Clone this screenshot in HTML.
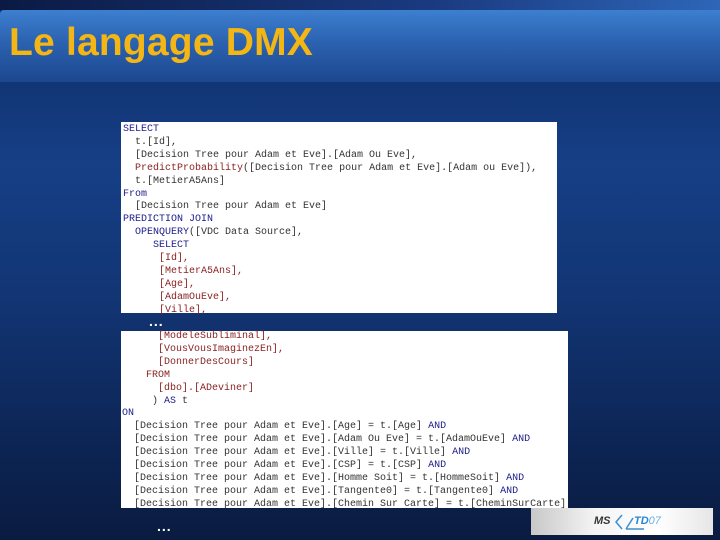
<!DOCTYPE html>
<html><head><meta charset="utf-8"><style>
*{margin:0;padding:0}
body{width:720px;height:540px;overflow:hidden;position:relative;font-family:"Liberation Sans",sans-serif;
background:linear-gradient(180deg,#0e2a62 0%,#163f86 30%,#123574 55%,#0d2657 80%,#0a1b40 100%);}
.top{position:absolute;left:0;top:0;width:720px;height:10px;background:linear-gradient(90deg,#0b1a44,#1a3a80 60%,#2e66b8);}
.hdr{position:absolute;left:0;top:10px;width:720px;height:72px;background:linear-gradient(180deg,#3d7fd0 0%,#2b62b0 45%,#1d478f 100%);border-top-left-radius:4px}
h1{position:absolute;left:9px;top:21px;font-size:39px;font-weight:bold;color:#f4b614;letter-spacing:0.2px}
.box{position:absolute;background:#fff;font-family:"Liberation Mono",monospace;font-size:10px;line-height:12.9px;color:#333;white-space:pre}
.k{color:#1c1c8a}.m{color:#8a2222}
.dots{position:absolute;color:#fff;font-weight:bold;font-size:14px;letter-spacing:1px}
.logo{position:absolute;left:531px;top:508px;width:182px;height:27px;background:linear-gradient(90deg,#c8c8c8,#f4f4f4 35%,#fff 70%,#e6e6e6)}
</style></head><body>
<div class="top"></div><div class="hdr"></div>
<h1>Le langage DMX</h1>
<div class="box" style="left:121px;top:122px;width:436px;height:191px;padding:2px 0 0 2px;box-sizing:border-box"><span class="k">SELECT</span>
  t.[Id],
  [Decision Tree pour Adam et Eve].[Adam Ou Eve],
  <span class="m">PredictProbability</span>([Decision Tree pour Adam et Eve].[Adam ou Eve]),
  t.[MetierA5Ans]
<span class="k">From</span>
  [Decision Tree pour Adam et Eve]
<span class="k">PREDICTION JOIN</span>
  <span class="k">OPENQUERY</span>([VDC Data Source],
     <span class="k">SELECT</span>
      <span class="m">[Id],</span>
      <span class="m">[MetierA5Ans],</span>
      <span class="m">[Age],</span>
      <span class="m">[AdamOuEve],</span>
      <span class="m">[Ville],</span></div>
<div class="dots" style="left:149px;top:313px">...</div>
<div class="box" style="left:121px;top:331px;width:447px;height:177px;padding:0 0 0 1px;box-sizing:border-box">      <span class="m">[ModeleSubliminal],</span>
      <span class="m">[VousVousImaginezEn],</span>
      <span class="m">[DonnerDesCours]</span>
    <span class="m">FROM</span>
      <span class="m">[dbo].[ADeviner]</span>
     ) <span class="k">AS</span> t
<span class="k">ON</span>
  [Decision Tree pour Adam et Eve].[Age] = t.[Age] <span class="k">AND</span>
  [Decision Tree pour Adam et Eve].[Adam Ou Eve] = t.[AdamOuEve] <span class="k">AND</span>
  [Decision Tree pour Adam et Eve].[Ville] = t.[Ville] <span class="k">AND</span>
  [Decision Tree pour Adam et Eve].[CSP] = t.[CSP] <span class="k">AND</span>
  [Decision Tree pour Adam et Eve].[Homme Soit] = t.[HommeSoit] <span class="k">AND</span>
  [Decision Tree pour Adam et Eve].[Tangente0] = t.[Tangente0] <span class="k">AND</span>
  [Decision Tree pour Adam et Eve].[Chemin Sur Carte] = t.[CheminSurCarte]</div>
<div class="dots" style="left:157px;top:518px">...</div>
<div class="logo"><div style="position:absolute;left:63px;top:7px;font:italic bold 11px 'Liberation Sans',sans-serif;color:#333">MS</div>
<svg style="position:absolute;left:83px;top:6px" width="30" height="16" viewBox="0 0 30 16"><path d="M8 1 L2 8 L8 15 M12 15 L19 4 M12 15 L30 15" fill="none" stroke="#3a8fd0" stroke-width="1.5"/></svg>
<div style="position:absolute;left:103px;top:7px;font:italic bold 11px 'Liberation Sans',sans-serif;color:#2a86d0">TD<span style="font-weight:normal;color:#6aaee0">07</span></div></div>
</body></html>
